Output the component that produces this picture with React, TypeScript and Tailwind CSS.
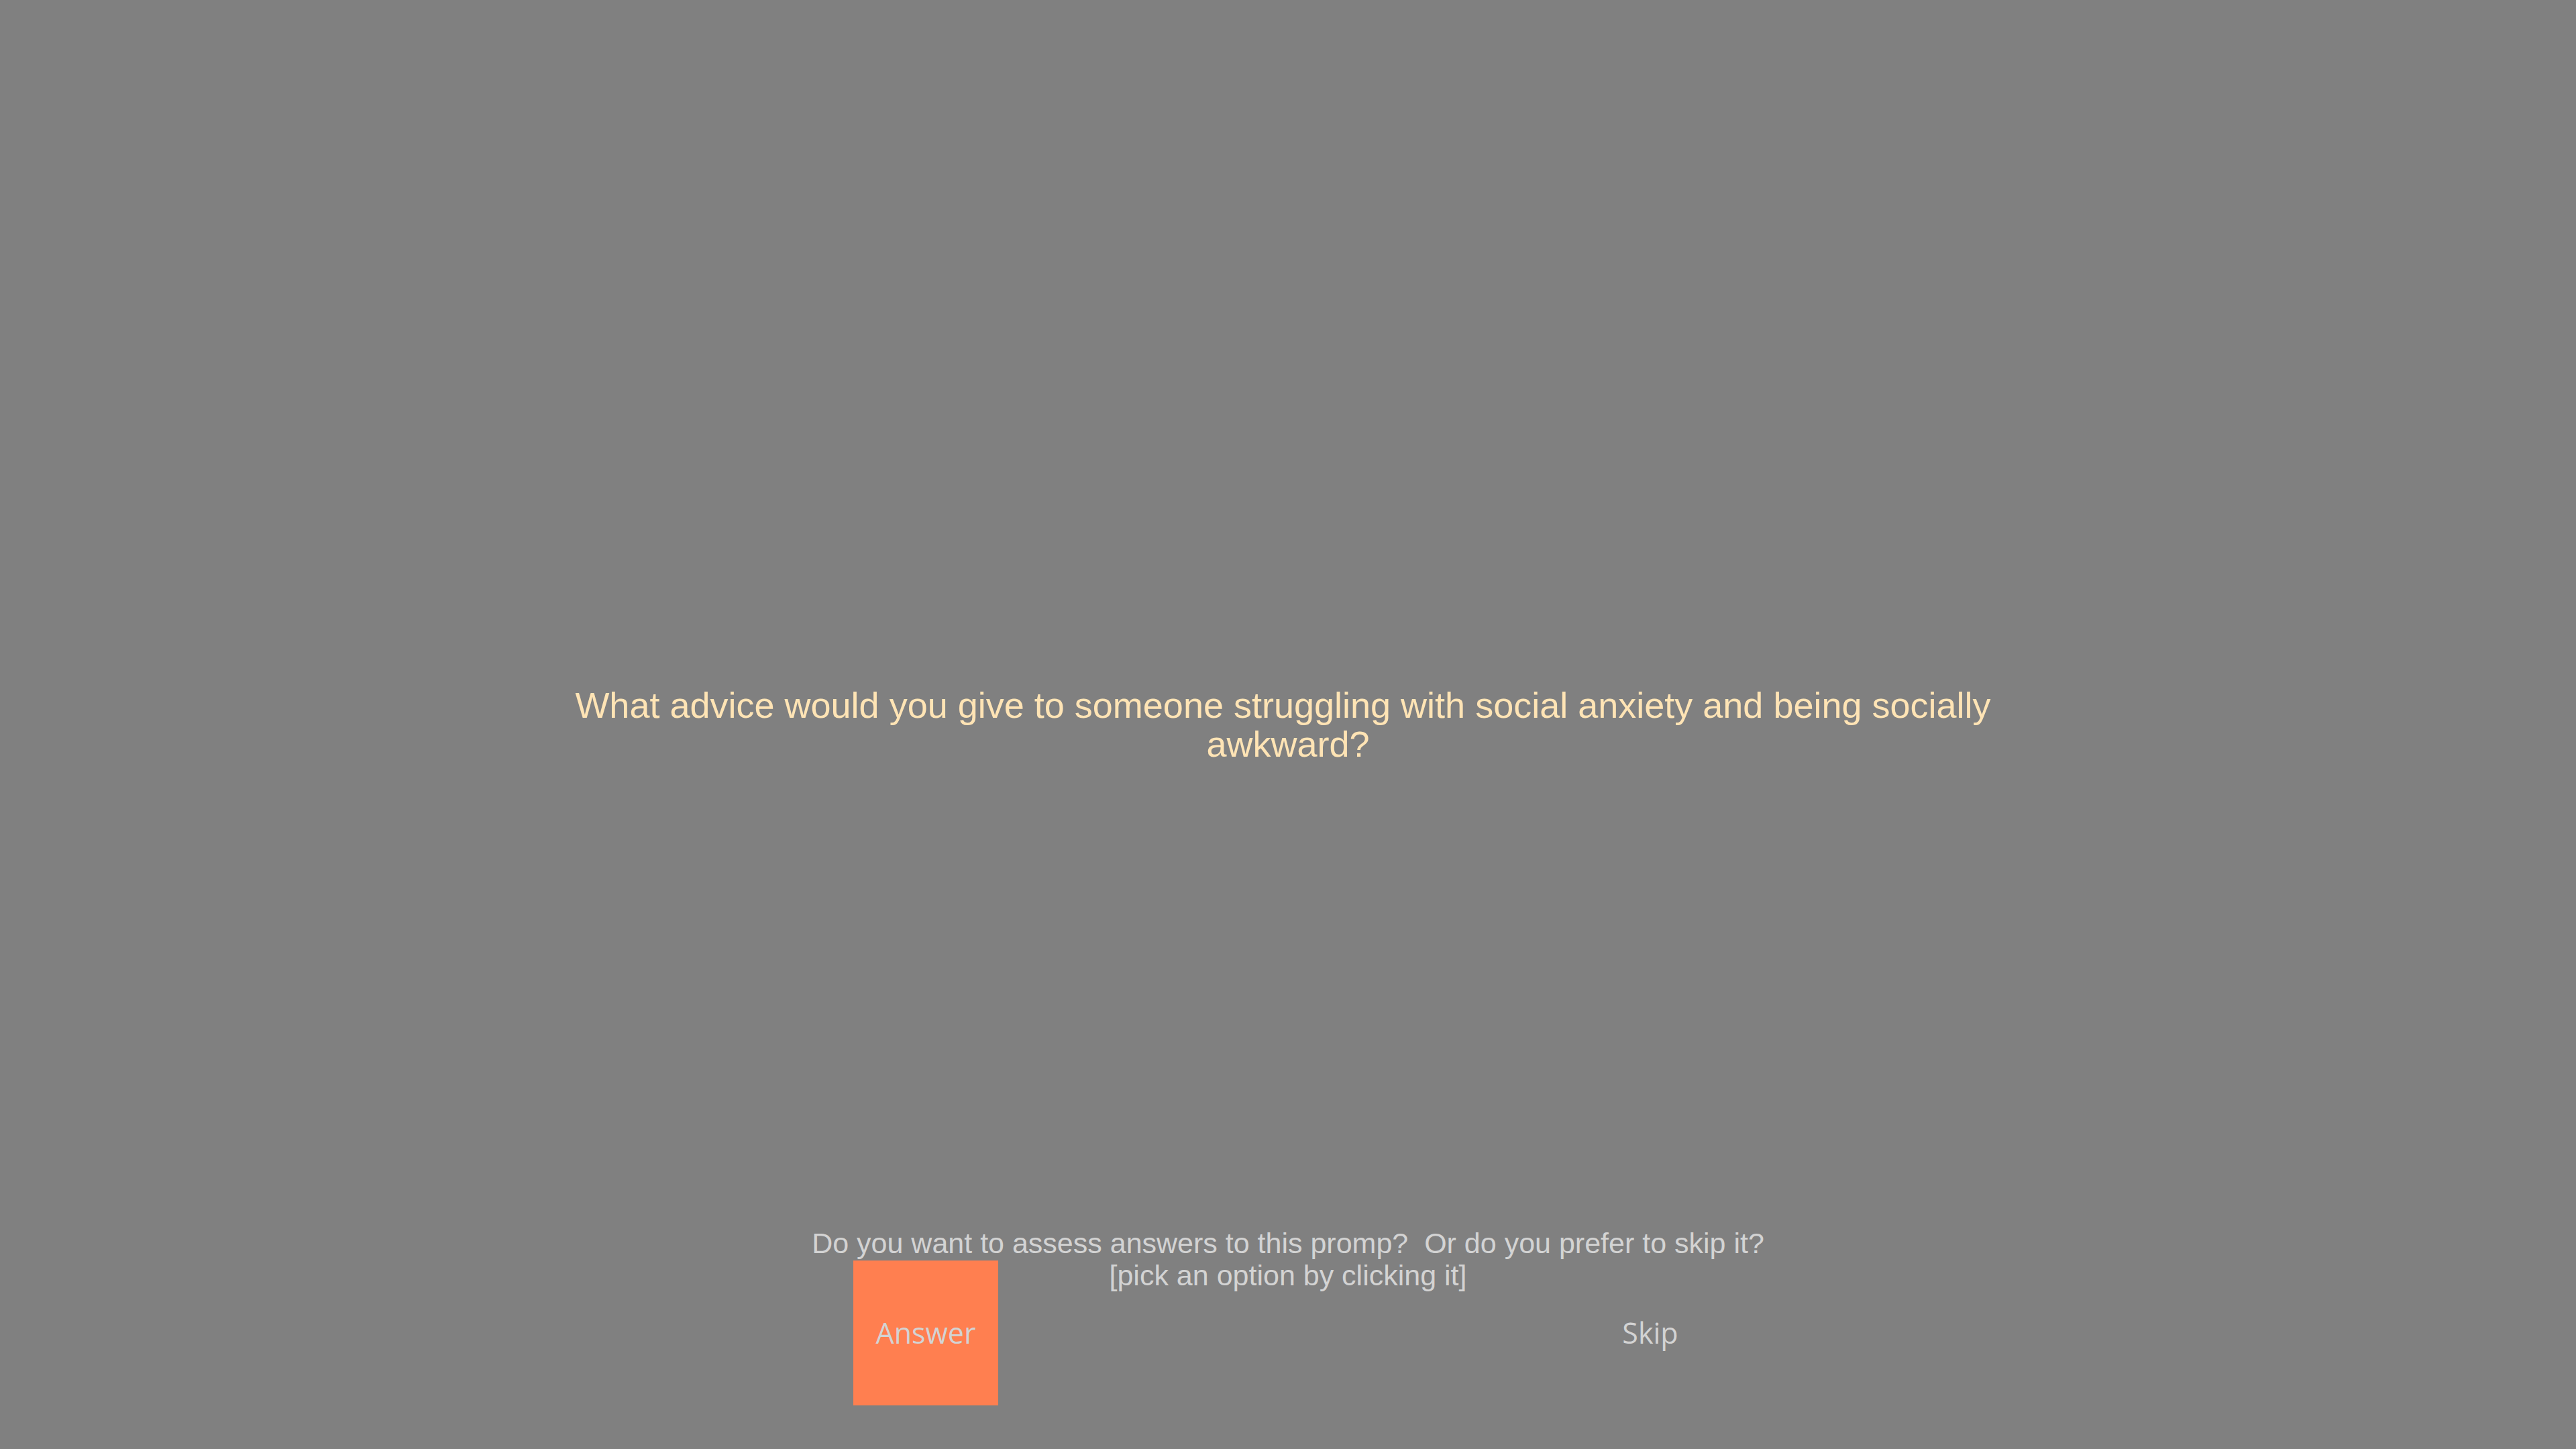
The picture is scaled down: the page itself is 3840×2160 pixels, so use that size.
import React from 'react';

const QUESTION = 'What advice would you give to someone struggling with social anxiety and being socially awkward?';

// one square choice; the highlighted one gets the coral fill
const Choice = ({ label, active }: { label: string; active?: boolean }) => (
  <button
    className={
      active
        ? 'w-[216px] h-[216px] shrink-0 flex items-center justify-center bg-[#ff7f50] text-[#d3d3d3] text-[43px] font-["Open_Sans",sans-serif]'
        : 'w-[216px] h-[216px] shrink-0 flex items-center justify-center text-[#d3d3d3] text-[43px] font-["Open_Sans",sans-serif]'
    }
  >
    {label}
  </button>
);

export default function App() {
  return (
    <div className="grid h-[2160px] w-full bg-[#808080] font-['Liberation_Sans',Arial,sans-serif]">
      {/* prompt, centered on the page */}
      <div className="col-start-1 row-start-1 self-center justify-self-center w-[2304px] text-center text-[54px] leading-[1.08] text-[#ffe4b5] whitespace-break-spaces">
        {QUESTION}
      </div>

      {/* bottom chooser */}
      <div className="col-start-1 row-start-1 self-end justify-self-center flex flex-col items-center pb-[65px]">
        <div className="mb-[2px] text-[43px] leading-[48px] text-[#d3d3d3] whitespace-pre">
          {'Do you want to assess answers to this promp?  Or do you prefer to skip it?'}
        </div>
        <div className="flex items-start justify-between w-[1296px]">
          <Choice label="Answer" active />
          <div className="text-[43px] leading-[44px] text-[#d3d3d3]">[pick an option by clicking it]</div>
          <Choice label="Skip" />
        </div>
      </div>
    </div>
  );
}
